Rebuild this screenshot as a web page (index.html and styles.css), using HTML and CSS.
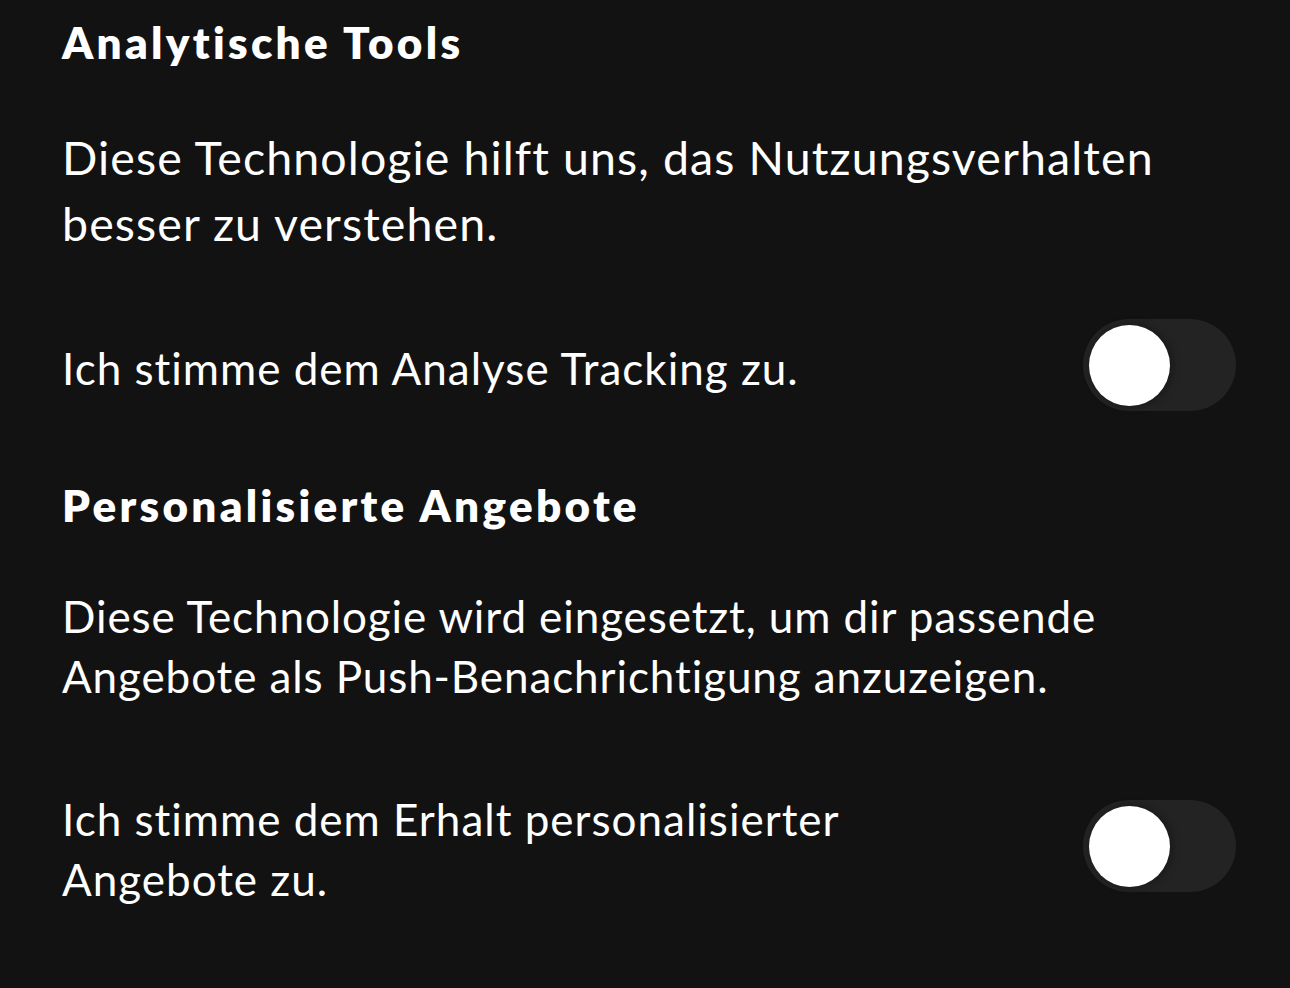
FILE: index.html
```html
<!DOCTYPE html>
<html lang="de">
<head>
<meta charset="utf-8">
<title>Einstellungen</title>
<link rel="stylesheet" href="styles.css">
</head>
<body>
<main class="settings">
  <section class="group group-analytics">
    <h2 class="group-title">Analytische Tools</h2>
    <p class="group-text text-a">Diese Technologie hilft uns, das Nutzungsverhalten besser zu verstehen.</p>
    <div class="consent-row row-a">
      <span class="consent-label">Ich stimme dem Analyse Tracking zu.</span>
      <div class="toggle" role="switch" aria-checked="false"><span class="knob"></span></div>
    </div>
  </section>
  <section class="group group-offers">
    <h2 class="group-title title-b">Personalisierte Angebote</h2>
    <p class="group-text text-b">Diese Technologie wird eingesetzt, um dir passende Angebote als Push-Benachrichtigung anzuzeigen.</p>
    <div class="consent-row row-b">
      <span class="consent-label">Ich stimme dem Erhalt personalisierter Angebote zu.</span>
      <div class="toggle" role="switch" aria-checked="false"><span class="knob"></span></div>
    </div>
  </section>
</main>
</body>
</html>
```
FILE: styles.css
```css
html, body {
  margin: 0;
  padding: 0;
  background: #121212;
}
body {
  color: #ffffff;
  font-family: "Lato", "Liberation Sans", sans-serif;
  font-size: 44px;
  letter-spacing: 1px;
}
.settings {
  padding: 12px 54px 0 62px;
}
.group-title {
  margin: 0;
  font-size: 44px;
  font-weight: 800;
  line-height: 60px;
  letter-spacing: 3.3px;
}
.group-text {
  margin: 0;
  font-weight: 400;
}
.text-a {
  margin-top: 52px;
  font-size: 46.5px;
  line-height: 66px;
  letter-spacing: 1.1px;
}
.text-b {
  margin-top: 51px;
  line-height: 60px;
  letter-spacing: 0.9px;
}
.title-b {
  margin-top: 64px;
}
.consent-row {
  display: flex;
  align-items: center;
  gap: 40px;
}
.row-a {
  margin-top: 63px;
}
.row-b {
  margin-top: 77px;
}
.consent-label {
  flex: 1;
  line-height: 60px;
  padding-top: 6px;
  padding-right: 130px;
}
.toggle {
  flex: none;
  width: 153px;
  height: 92px;
  border-radius: 46px;
  background: #232323;
  display: flex;
  align-items: center;
  padding-left: 6px;
  box-sizing: border-box;
}
.knob {
  width: 81px;
  height: 81px;
  border-radius: 50%;
  background: #ffffff;
  box-shadow: 2px 0 8px rgba(0, 0, 0, 0.35);
}
```
